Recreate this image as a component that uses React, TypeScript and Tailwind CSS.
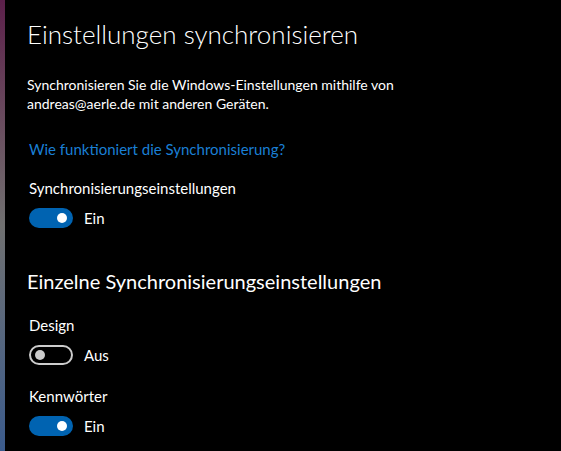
import React from "react";

function Toggle({ on }: { on: boolean }) {
  if (on) {
    return (
      <div className="w-[44px] h-[20px] rounded-full bg-[#0063b1] flex items-center justify-end pr-[6px]">
        <div className="w-[10px] h-[10px] rounded-full bg-white" />
      </div>
    );
  }
  return (
    <div className="w-[44px] h-[20px] rounded-full border-2 border-[#cccccc] flex items-center pl-[4px]">
      <div className="w-[10px] h-[10px] rounded-full bg-[#cccccc]" />
    </div>
  );
}

function ToggleRow({ label, on }: { label: string; on: boolean }) {
  return (
    <div className="flex flex-col">
      <div className="text-[15px] leading-[20px] text-white">{label}</div>
      <div className="flex items-center gap-[11px] mt-[10px]">
        <Toggle on={on} />
        <span className="text-[15px] leading-[20px] text-white">{on ? "Ein" : "Aus"}</span>
      </div>
    </div>
  );
}

export default function App() {
  return (
    <div className="w-[561px] h-[451px] bg-black flex overflow-hidden" style={{ fontFamily: "Lato, 'Open Sans', sans-serif" }}>
      <div className="w-[5px] h-full bg-gradient-to-b from-[#5b1f4a] via-[#707070] to-[#3b5b8c] shrink-0" />
      <div className="flex flex-col pl-[22px] pt-[15px]">
        <h1 className="text-[26px] leading-[38px] font-light text-white">Einstellungen synchronisieren</h1>
        <p className="mt-[22px] text-[14px] leading-[19px] text-white">
          Synchronisieren Sie die Windows-Einstellungen mithilfe von
          <br />
          andreas@aerle.de mit anderen Geräten.
        </p>
        <div className="mt-[26px] pl-[2px] text-[15px] leading-[20px] text-[#1a7fd4]">Wie funktioniert die Synchronisierung?</div>
        <div className="mt-[19px] pl-[2px]">
          <ToggleRow label="Synchronisierungseinstellungen" on={true} />
        </div>
        <h2 className="mt-[39px] text-[20px] leading-[28px] text-white">Einzelne Synchronisierungseinstellungen</h2>
        <div className="mt-[20px] pl-[2px]">
          <ToggleRow label="Design" on={false} />
        </div>
        <div className="mt-[21px] pl-[2px]">
          <ToggleRow label="Kennwörter" on={true} />
        </div>
      </div>
    </div>
  );
}
